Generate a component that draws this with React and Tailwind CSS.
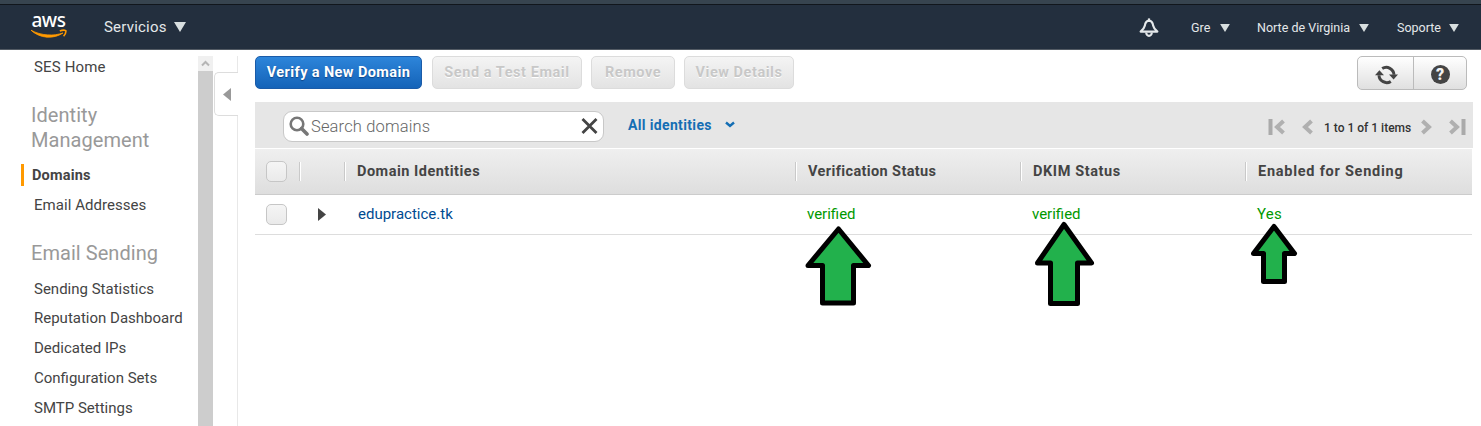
import React from "react";

const Caret = ({ w = 11, h = 9 }) => (
  <svg width={w} height={h} viewBox="0 0 11 9" className="shrink-0">
    <path d="M0 0H11L5.5 9Z" fill="#d8dfe0" />
  </svg>
);

const AwsLogo = () => (
  <div className="flex w-[38px] flex-col items-center">
    <span className="h-[15px] pr-[1px] font-['Noto_Sans',sans-serif] text-[19px] font-medium leading-[12px] tracking-[-0.4px] text-white">aws</span>
    <svg width="38" height="10" viewBox="0 0 38 10" className="shrink-0">
      <path d="M1 1.2C11 6.8 24 7.2 33 4C24 10.2 10 9.8 1 1.2Z" fill="#f90" stroke="#f90" strokeWidth=".8" />
      <path d="M29.8 2C32 1 34.6 1 35.8 1.6C36.2 3.4 35.2 5.6 33.6 7.2" fill="none" stroke="#f90" strokeWidth="1.6" />
    </svg>
  </div>
);

const Bell = () => (
  <svg width="20" height="20" viewBox="0 0 20 20" className="shrink-0">
    <path d="M10 2.6C7 2.8 6.2 4.8 5.8 7.8C5.4 10 4 11.6 1.6 13.6H18.4C16 11.6 14.6 10 14.2 7.8C13.8 4.8 13 2.8 10 2.6Z" fill="none" stroke="#e4e8ea" strokeWidth="2.1" strokeLinejoin="round" />
    <path d="M10 .4V3" stroke="#e4e8ea" strokeWidth="2.2" />
    <path d="M7.2 14.5A2.8 3.4 0 0 0 12.8 14.5" fill="none" stroke="#e4e8ea" strokeWidth="2.1" />
  </svg>
);

const Header = () => (
  <header className="flex h-[50px] flex-col border-b border-[#535b64] bg-[#232f3e]">
    <div className="h-[5px] shrink-0 border-b border-[#11161c] bg-[#37444f]" />
    <div className="flex h-[44px] items-center text-[#e4e8ea]">
      <div className="ml-[30px] pb-px"><AwsLogo /></div>
      <div className="ml-[36px] flex items-center text-[15px] tracking-[0.2px]">
        <span className="w-[70px] shrink-0 whitespace-nowrap">Servicios</span><Caret w={12} h={10} />
      </div>
      <div className="ml-auto flex w-[342px] shrink-0 items-center pt-[2px] text-[12.5px]">
        <Bell />
        <span className="ml-[32px] w-[29px] whitespace-nowrap">Gre</span><Caret w={10} h={8} />
        <span className="ml-[27px] w-[102px] whitespace-nowrap">Norte de Virginia</span><Caret w={10} h={8} />
        <span className="ml-[28px] w-[52px] whitespace-nowrap">Soporte</span><Caret w={10} h={8} />
      </div>
    </div>
  </header>
);

const NavItem = ({ children }) => (
  <a className="flex h-[30px] items-center whitespace-nowrap pl-[34px] text-[15px] text-[#444]">{children}</a>
);

const Sidebar = () => (
  <aside className="flex w-[238px] shrink-0">
    <nav className="w-[198px]">
      <div className="pt-[2px] tracking-[0.15px]"><NavItem>SES Home</NavItem></div>
      <h2 className="mt-[21px] pl-[31px] text-[20px] leading-[25px] tracking-[0.05px] text-[#999]">Identity<br />Management</h2>
      <a className="ml-[21px] mt-[11px] flex h-[22px] items-center border-l-[3px] border-[#f90] pl-[8px] pt-[2px] text-[14.5px] font-bold tracking-[0.2px] text-[#444]">Domains</a>
      <div className="mt-[4px] tracking-[0.05px]"><NavItem>Email Addresses</NavItem></div>
      <h2 className="mt-[21px] pl-[31px] text-[20px] leading-[25px] tracking-[0.05px] text-[#999]">Email Sending</h2>
      <div className="mt-[8px]">
        <NavItem>Sending Statistics</NavItem>
        <div className="-mt-px"><NavItem>Reputation Dashboard</NavItem></div>
        <NavItem>Dedicated IPs</NavItem>
        <NavItem>Configuration Sets</NavItem>
        <NavItem>SMTP Settings</NavItem>
      </div>
    </nav>
    <div className="mt-[6px] w-[15px] bg-[#cdcdcd]">
      <div className="flex h-[15px] items-center justify-center bg-[#f0f0f0]">
        <svg width="9" height="7" viewBox="0 0 9 7"><path d="M1 5.5L4.5 2L8 5.5" fill="none" stroke="#b5b5b5" strokeWidth="2" /></svg>
      </div>
    </div>
    <div className="mt-[6px] flex w-[25px] flex-col pl-px">
      <div className="h-[16px] border-r border-[#e8e8e8]" />
      <div className="flex h-[44px] items-center rounded-l-[5px] border border-r-0 border-[#ddd] pl-[8px]">
        <svg width="8" height="13" viewBox="0 0 8 13"><path d="M8 0V13L0 6.5Z" fill="#999" /></svg>
      </div>
      <div className="grow border-r border-[#e8e8e8]" />
    </div>
  </aside>
);

const Disabled = ({ className, children }) => (
  <button className={`h-[33px] whitespace-nowrap rounded-[5px] border border-[#dcdcdc] bg-linear-to-b from-[#f4f4f4] to-[#e3e3e3] pt-px text-[14.5px] font-bold tracking-[0.55px] text-[#c8c8c8] [text-shadow:0_1px_0_#fff] ${className}`}>{children}</button>
);

const Check = () => (
  <span className="block size-[21px] shrink-0 rounded-[5px] border border-[#c6c6c6] bg-linear-to-b from-[#f5f5f5] to-[#eaeaea]" />
);

const Divider = () => <span className="h-[19px] w-[2px] shrink-0 border-l border-r border-l-[#c9c9c9] border-r-white" />;

const Chevron = ({ flip, bar }) => (
  <svg width={bar ? 17 : 11} height="16" viewBox={bar ? "0 0 17 16" : "0 0 11 16"} className={flip ? "shrink-0 -scale-x-100" : "shrink-0"}>
    {bar && <path d="M2.5 0V16" stroke="#aaa" strokeWidth="4" />}
    <path d={bar ? "M15.5 2L9 8L15.5 14" : "M9.5 2L3 8L9.5 14"} fill="none" stroke="#b0b0b0" strokeWidth="4" />
  </svg>
);

const Toolbar = () => (
  <div className="flex h-[46px] items-center bg-[#e6e6e6] pl-[28px] pt-[2px]">
    <div className="flex h-[31px] w-[321px] items-center rounded-[9px] border border-[#c8c8c8] bg-white pl-[5px] pr-[5px]">
      <svg width="20" height="20" viewBox="0 0 20 20" className="shrink-0">
        <circle cx="8" cy="8" r="6.3" fill="none" stroke="#777" strokeWidth="2.6" />
        <path d="M12.5 12.5L18 18" stroke="#777" strokeWidth="3.6" strokeLinecap="round" />
      </svg>
      <span className="ml-[2px] grow whitespace-nowrap pt-[2px] text-[16.5px] font-light tracking-[0.15px] text-[#666]">Search domains</span>
      <svg width="17" height="16" viewBox="0 0 17 16" className="shrink-0"><path d="M1.5 1L15.5 15M15.5 1L1.5 15" stroke="#444" strokeWidth="2.8" /></svg>
    </div>
    <span className="ml-[24px] w-[97px] whitespace-nowrap pb-[2px] text-[14px] font-bold tracking-[0.35px] text-[#146eb4]">All identities</span>
    <svg width="10" height="7" viewBox="0 0 10 7" className="mb-[3px]"><path d="M1 1.5L5 5L9 1.5" fill="none" stroke="#146eb4" strokeWidth="2.4" /></svg>
    <div className="ml-auto flex items-center pr-[7px] pt-[2px] text-[12px] font-medium text-[#333]">
      <Chevron bar /><span className="w-[17px]" /><Chevron />
      <span className="ml-[11px] w-[97px] whitespace-nowrap pt-px">1 to 1 of 1 items</span>
      <Chevron flip /><span className="w-[17px]" /><Chevron flip bar />
    </div>
  </div>
);

const Table = () => (
  <div className="mr-px text-[#444]">
    <div className="mt-px flex h-[46px] items-center border-b border-[#ccc] bg-linear-to-b from-[#efefef] to-[#dedede] pl-[11px] text-[14.5px] font-bold">
      <Check />
      <div className="flex w-[57px] items-center pl-[12px]"><Divider /></div>
      <div className="flex w-[451px] items-center gap-[11px] tracking-[0.5px]"><Divider /><span>Domain Identities</span></div>
      <div className="flex w-[225px] items-center gap-[11px] tracking-[0.38px]"><Divider /><span>Verification Status</span></div>
      <div className="flex w-[225px] items-center gap-[11px] tracking-[0.6px]"><Divider /><span>DKIM Status</span></div>
      <div className="flex items-center gap-[11px] tracking-[0.75px]"><Divider /><span>Enabled for Sending</span></div>
    </div>
    <div className="flex h-[40px] items-center border-b border-[#ddd] pl-[11px] text-[15px]">
      <Check />
      <div className="w-[71px] pl-[31px]">
        <svg width="8" height="13" viewBox="0 0 8 13"><path d="M0 0V13L8 6.5Z" fill="#444" /></svg>
      </div>
      <div className="w-[449px] text-[#004b91]">edupractice.tk</div>
      <div className="w-[225px] text-[#090]">verified</div>
      <div className="w-[225px] text-[#090]">verified</div>
      <div className="tracking-[0.2px] text-[#090]">Yes</div>
    </div>
  </div>
);

const Actions = () => (
  <div className="flex items-start">
    <button className="h-[33px] w-[167px] whitespace-nowrap rounded-[5px] border border-[#1a5ba8] bg-linear-to-b from-[#2d85da] to-[#1463b8] pt-px text-[14.5px] font-bold tracking-[0.4px] text-white [text-shadow:0_1px_1px_#0d4487]">Verify a New Domain</button>
    <Disabled className="ml-[10px] w-[150px]">Send a Test Email</Disabled>
    <Disabled className="ml-[9px] w-[84px]">Remove</Disabled>
    <Disabled className="ml-[9px] w-[110px]">View Details</Disabled>
    <div className="ml-auto mr-[6px] flex h-[34px] w-[110px] rounded-[5px] border border-[#bbb] bg-linear-to-b from-white to-[#e0e0e0]">
      <div className="flex w-[56px] items-center justify-center border-r border-[#bbb] pl-px pt-[3px]">
        <svg width="23" height="20" viewBox="0 0 23 20">
          <path d="M7.2 3.6A7.7 7.7 0 0 1 19 9.8M15.8 16.4A7.7 7.7 0 0 1 4 10.2" fill="none" stroke="#444" strokeWidth="3" />
          <path d="M14 9.4H23L18.6 14.4ZM0 10.2H9L4.4 5.2Z" fill="#444" />
        </svg>
      </div>
      <div className="flex grow items-center justify-center pt-[3px]">
        <span className="flex size-[19px] items-center justify-center rounded-full bg-[#444] text-[16px] font-black leading-none text-[#f2f2f2]">?</span>
      </div>
    </div>
  </div>
);

const arrows = [
  "838.5,229 868.5,265.5 853.5,265.5 853.5,303 822.5,303 822.5,265.5 808,265.5",
  "1064,224.5 1091.5,263 1077.5,263 1077.5,303.5 1050.5,303.5 1050.5,263 1037.5,263",
  "1274,226.5 1294.5,253.5 1284.5,253.5 1284.5,281.5 1263.5,281.5 1263.5,253.5 1253.5,253.5",
];

export default function App() {
  return (
    <div className="relative h-[426px] w-[1481px] overflow-hidden bg-white font-[Roboto,sans-serif]">
      <Header />
      <div className="flex h-[376px]">
        <Sidebar />
        <main className="ml-[17px] w-[1218px] pt-[6px]">
          <div className="h-[46px]"><Actions /></div>
          <Toolbar />
          <Table />
        </main>
      </div>
      <svg className="pointer-events-none absolute left-0 top-0" width="1481" height="426" viewBox="0 0 1481 426">
        {arrows.map((points) => (
          <polygon key={points} points={points} fill="#22b14c" stroke="#000" strokeWidth="5" strokeLinejoin="round" />
        ))}
      </svg>
    </div>
  );
}
